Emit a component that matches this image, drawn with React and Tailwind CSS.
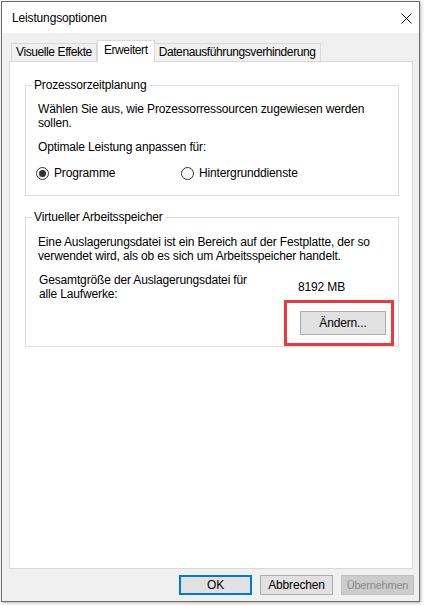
import React from 'react'

function Radio({ checked, label, className = '' }) {
  return (
    <div className={`flex items-center ${className}`}>
      <span className="w-[13px] h-[13px] rounded-full border border-[#333] bg-white flex items-center justify-center">
        {checked && <span className="w-[7px] h-[7px] rounded-full bg-[#333]" />}
      </span>
      <span className="ml-[5px]">{label}</span>
    </div>
  )
}

function Group({ title, className = '', children }) {
  return (
    <div className={`relative border border-[#dcdcdc] ${className}`}>
      <span className="absolute -top-[8px] left-[6px] bg-white px-[2px] leading-[14px] whitespace-nowrap">{title}</span>
      {children}
    </div>
  )
}

export default function App() {
  return (
    <div
      className="w-[424px] h-[606px] bg-white pt-[1px] pl-[1px] text-[12px] leading-[14px] tracking-[-0.15px] text-black"
      style={{ fontFamily: '"Liberation Sans", Arial, sans-serif' }}
    >
      <div className="w-[419px] h-[601px] border border-[#6a6a6a] shadow-[1px_1px_3px_rgba(0,0,0,0.3)] bg-[#f0f0f0] flex flex-col">
        {/* Title bar */}
        <div className="h-[31px] bg-white flex items-center justify-between pl-[10px] pr-[7px]">
          <span className="text-[12px]">Leistungsoptionen</span>
          <svg width="11" height="11" viewBox="0 0 11 11" className="mt-[1px]">
            <path d="M0.5 0.5 L10.5 10.5 M10.5 0.5 L0.5 10.5" stroke="#000" strokeWidth="1" fill="none" />
          </svg>
        </div>

        {/* Body */}
        <div className="flex-1 flex flex-col pt-[7px] pl-[7px]">
          {/* Tabs */}
          <div className="flex items-end h-[21px] pl-[2px] whitespace-nowrap tracking-[-0.4px]">
            <div className="h-[18px] border border-b-0 border-[#d9d9d9] bg-[#f0f0f0] px-[4px] pt-[1px]">
              Visuelle Effekte
            </div>
            <div className="relative z-10 h-[22px] -mb-[1px] border border-b-0 border-[#d9d9d9] bg-white px-[6px] pt-[2px]">
              Erweitert
            </div>
            <div className="h-[18px] border border-l-0 border-b-0 border-[#d9d9d9] bg-[#f0f0f0] px-[4px] pt-[1px]">
              Datenausführungsverhinderung
            </div>
          </div>

          {/* Panel */}
          <div className="w-[404px] h-[508px] bg-white border border-[#d9d9d9] pl-[15px] pt-[23px]">
            <Group title="Prozessorzeitplanung" className="w-[374px] pl-[12px] pt-[16px] pb-[15px]">
              <p className="w-[350px]">Wählen Sie aus, wie Prozessorressourcen zugewiesen werden sollen.</p>
              <p className="mt-[10px]">Optimale Leistung anpassen für:</p>
              <div className="flex mt-[12px] -ml-[2px]">
                <Radio checked label="Programme" className="w-[145px]" />
                <Radio label="Hintergrunddienste" />
              </div>
            </Group>

            <Group title="Virtueller Arbeitsspeicher" className="mt-[21px] w-[374px] pl-[12px] pt-[17px] pb-[11px]">
              <p className="w-[352px]">
                Eine Auslagerungsdatei ist ein Bereich auf der Festplatte, der so verwendet wird, als ob es sich um Arbeitsspeicher handelt.
              </p>
              <div className="flex items-center mt-[10px] pl-[1px]">
                <div className="w-[259px]">
                  <p className="w-[225px]">Gesamtgröße der Auslagerungsdatei für alle Laufwerke:</p>
                </div>
                <span>8192 MB</span>
              </div>
              <div className="flex justify-end mt-[10px] pr-[12px]">
                <div className="relative">
                  <button className="w-[86px] h-[24px] bg-[#e1e1e1] border border-[#adadad] text-[12px] leading-[14px]">
                    Ändern...
                  </button>
                  <span className="absolute -top-[11px] -bottom-[11px] -left-[16px] -right-[8px] border-[3px] border-[#ea3a3d] pointer-events-none" />
                </div>
              </div>
            </Group>
          </div>

          {/* Buttons */}
          <div className="flex justify-end gap-[8px] mt-[6px] pr-[5px] whitespace-nowrap">
            <button className="w-[73px] h-[20px] px-0 bg-[#e1e1e1] border-2 border-[#0078d7] text-[12px] leading-[14px]">OK</button>
            <button className="w-[73px] h-[20px] px-0 bg-[#e1e1e1] border border-[#adadad] text-[12px] leading-[14px]">Abbrechen</button>
            <button className="w-[73px] h-[20px] px-0 bg-[#cccccc] border border-[#bfbfbf] text-[#8a8a8a] text-[11px] leading-[14px] tracking-[-0.2px]">Übernehmen</button>
          </div>
        </div>
      </div>
    </div>
  )
}
